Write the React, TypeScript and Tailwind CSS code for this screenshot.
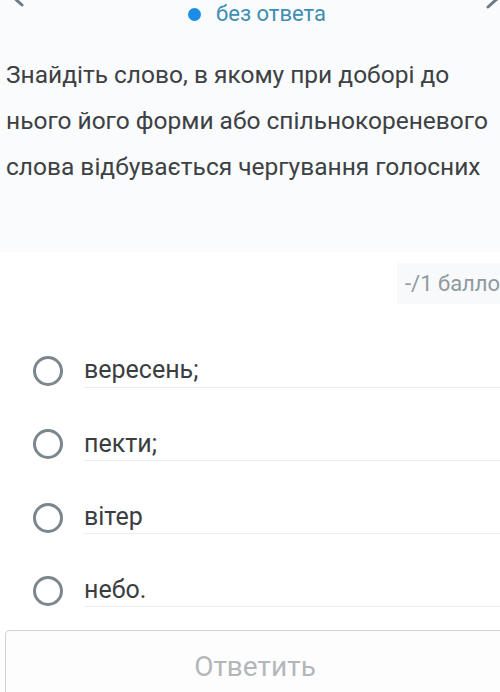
import React from 'react';

const options = ['вересень;', 'пекти;', 'вітер', 'небо.'];

export default function App() {
  return (
    <div className="relative w-[500px] h-[692px] overflow-hidden bg-white text-[#3b3f42]" style={{ fontFamily: 'Roboto, "Noto Sans", sans-serif' }}>
      <div className="relative bg-[#f9fbfc] h-[252px]">
        <svg className="absolute left-[6px] -top-[14px]" width="20" height="22" viewBox="0 0 20 22">
          <path d="M16 2 L6 10 L16 19" fill="none" stroke="#6e7a82" strokeWidth="3" strokeLinecap="round" />
        </svg>
        <svg className="absolute right-[-4px] -top-[12px]" width="20" height="22" viewBox="0 0 20 22">
          <path d="M4 2 L14 10 L4 19" fill="none" stroke="#6e7a82" strokeWidth="3" strokeLinecap="round" />
        </svg>
        <div className="flex items-center justify-center h-[28px] gap-[15px] pl-[14px]">
          <span className="w-[13px] h-[13px] rounded-full bg-[#1a8ee6]" />
          <span className="text-[22px] text-[#3f8db3] leading-none">без ответа</span>
        </div>
        <p className="mt-[24px] px-[6px] text-[24.5px] leading-[46px] whitespace-nowrap text-[#3d4144]">
          Знайдіть слово, в якому при доборі до<br />
          нього його форми або спільнокореневого<br />
          слова відбувається чергування голосних
        </p>
      </div>

      <div className="pt-[11px] pl-[397px]">
        <div className="w-[160px] bg-[#f8f9fa] h-[41px] pl-[8px] flex items-center text-[22px] text-[#8f999e] whitespace-nowrap">
          -/1 баллов
        </div>
      </div>

      <div className="mt-[50px] flex flex-col gap-[39.3px]">
        {options.map((o) => (
          <div key={o} className="flex items-center h-[34px]">
            <span className="ml-[33px] mr-[21px] w-[30px] h-[30px] rounded-full border-[3px] border-[#7b878d]" />
            <div className="flex-1 h-[34px] flex items-center border-b border-[#ececec] text-[25px] text-[#3a3e41] -mt-[1px]">
              {o}
            </div>
          </div>
        ))}
      </div>

      <div className="absolute left-[5px] top-[630px] w-[500px] h-[80px] rounded-[4px] border-[1.5px] border-[#d3d3d3] bg-[#fdfdfd] flex items-start justify-center pt-[15px]">
        <span className="text-[28px] text-[#b3b7b9]">Ответить</span>
      </div>
    </div>
  );
}
